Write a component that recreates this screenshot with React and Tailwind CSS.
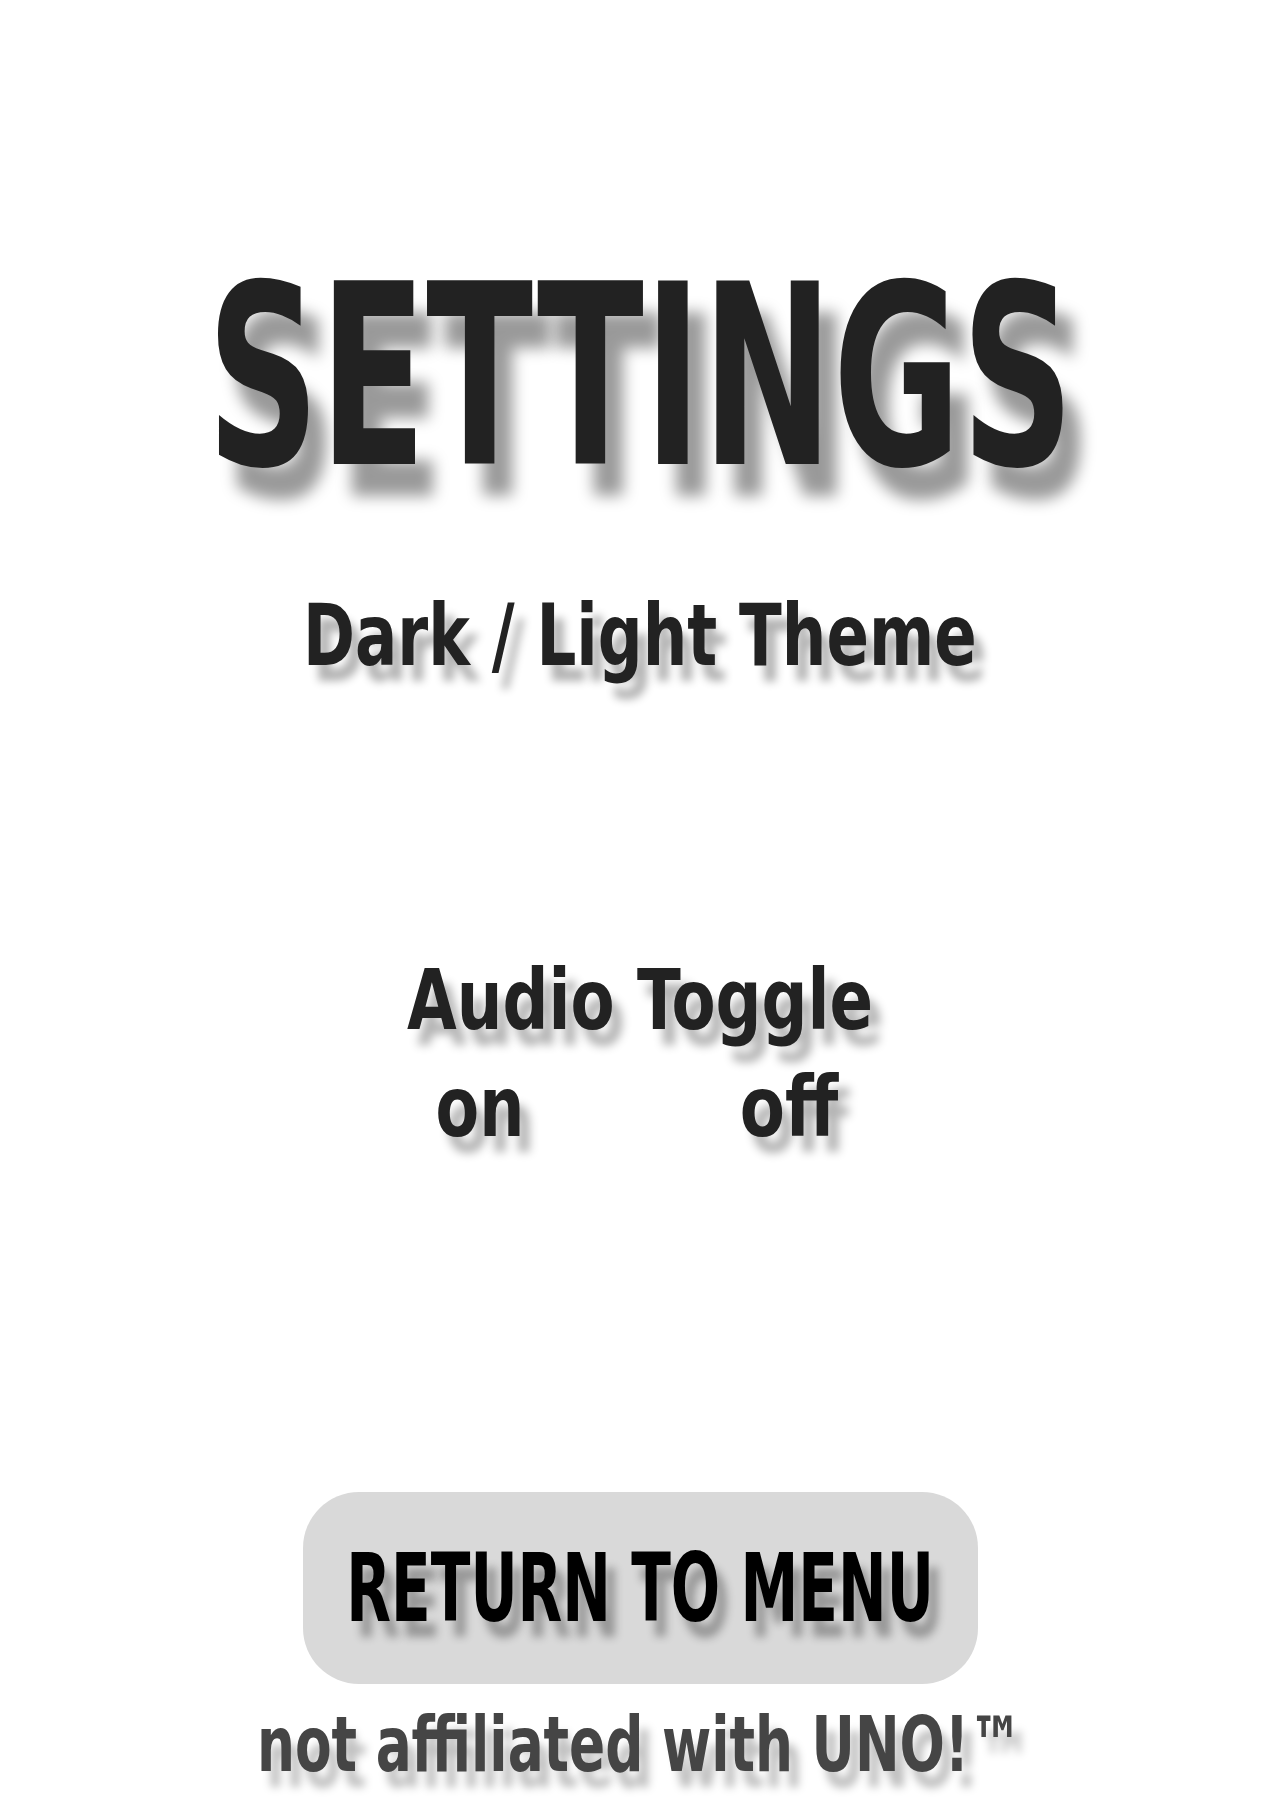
import React from 'react';

const font = { fontFamily: '"DejaVu Sans Condensed", "DejaVu Sans", sans-serif' };

export default function App() {
  return (
    <div className="w-[1280px] h-[1800px] bg-white flex flex-col items-center text-[#222222] font-bold" style={font}>
      {/* Title */}
      <h1 className="mt-[251px] text-[252px] leading-none whitespace-nowrap scale-x-[0.69] [text-shadow:26px_32px_18px_rgba(0,0,0,0.4)]">
        SETTINGS
      </h1>

      {/* Theme */}
      <p className="mt-[89px] text-[86px] leading-none whitespace-nowrap scale-x-[0.81] [text-shadow:12px_16px_10px_rgba(0,0,0,0.3)]">
        Dark / Light Theme
      </p>

      {/* Audio */}
      <p className="mt-[280px] text-[84px] leading-none whitespace-nowrap scale-x-[0.85] [text-shadow:12px_16px_10px_rgba(0,0,0,0.3)]">
        Audio Toggle
      </p>
      <div className="mt-[23px] pr-[11px] flex justify-center gap-[109px] text-[84px] leading-none">
        <span className="w-[200px] text-center scale-x-[0.84] [text-shadow:12px_16px_10px_rgba(0,0,0,0.3)]">on</span>
        <span className="w-[200px] text-center scale-x-[0.87] [text-shadow:12px_16px_10px_rgba(0,0,0,0.3)]">off</span>
      </div>

      {/* Return */}
      <button className="mt-[343px] w-[675px] h-[192px] rounded-[56px] bg-[#d9d9d9] text-black flex items-center justify-center">
        <span className="text-[95px] leading-none whitespace-nowrap scale-x-[0.68] [text-shadow:14px_16px_10px_rgba(0,0,0,0.3)]">
          RETURN TO MENU
        </span>
      </button>

      <p className="mt-[23px] text-[76px] leading-none whitespace-nowrap text-[#454545] scale-x-[0.78] [text-shadow:12px_16px_10px_rgba(0,0,0,0.25)]">
        not affiliated with UNO!™
      </p>
    </div>
  );
}
